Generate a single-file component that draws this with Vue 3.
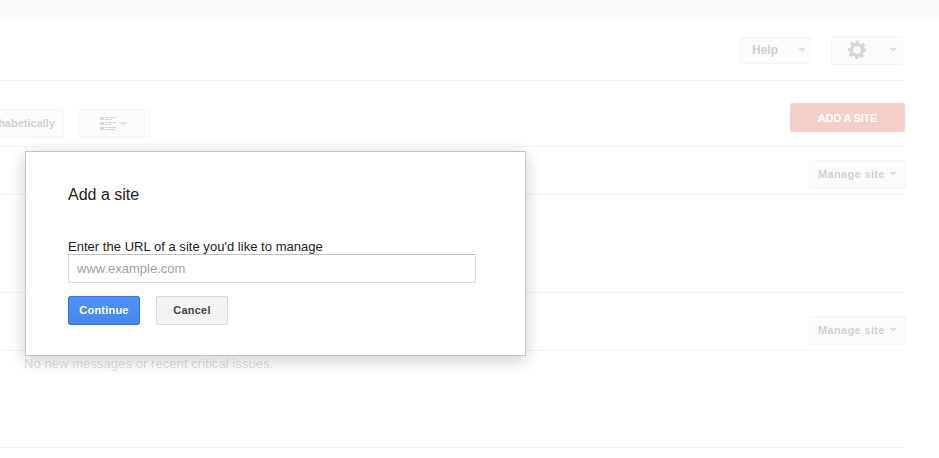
<script setup>
const placeholder = 'www.example.com'
</script>

<template>
  <div class="page">
    <div class="topbar"></div>
    <main class="main">
      <header class="head">
        <button class="btn help">Help<span class="caret"></span></button>
        <button class="btn gear">
          <svg width="20" height="20" viewBox="0 0 24 24">
            <path fill="#666" fill-rule="evenodd" d="M10 1h4l.6 3.200 1.900.8 2.700-1.800 2.800 2.800-1.800 2.700.8 1.900L23 10v4l-3.200.6-.8 1.900 1.800 2.700-2.800 2.800-2.700-1.800-1.900.8L14 23h-4l-.6-3.200-1.900-.8-2.700 1.800-2.800-2.800 1.800-2.700-.8-1.900L1 14v-4l3.200-.6.8-1.900-1.800-2.700 2.800-2.800 2.700 1.800 1.900-.8zM12 7.500a4.500 4.500 0 1 0 0 9 4.500 4.500 0 0 0 0-9z"/>
          </svg>
          <span class="caret"></span>
        </button>
      </header>
      <section class="toolbar">
        <button class="btn sort">Sort alphabetically</button>
        <button class="btn list">
          <svg width="16" height="14" viewBox="0 0 16 14">
            <g fill="#666">
              <rect x="0" y="0" width="4" height="3"/>
              <rect x="0" y="5" width="4" height="3"/>
              <rect x="0" y="10" width="4" height="3"/>
              <rect x="5" y="0" width="11" height="1"/>
              <rect x="5" y="2" width="7" height="1"/>
              <rect x="5" y="5" width="11" height="1"/>
              <rect x="5" y="7" width="7" height="1"/>
              <rect x="5" y="10" width="11" height="1"/>
              <rect x="5" y="12" width="11" height="1"/>
            </g>
          </svg>
          <span class="caret"></span>
        </button>
        <button class="add">Add a site</button>
      </section>
      <section class="site-head">
        <button class="btn manage">Manage site<span class="caret"></span></button>
      </section>
      <section class="site-body"></section>
      <section class="site-head tall">
        <button class="btn manage">Manage site<span class="caret"></span></button>
      </section>
      <section class="site-body last">
        <p class="empty">No new messages or recent critical issues.</p>
      </section>
    </main>

    <div class="overlay"></div>

    <div class="modal">
      <h2 class="title">Add a site</h2>
      <label class="label" for="url">Enter the URL of a site you'd like to manage</label>
      <input id="url" class="field" type="text" :placeholder="placeholder" />
      <div class="actions">
        <button class="action primary">Continue</button>
        <button class="action">Cancel</button>
      </div>
    </div>
  </div>
</template>

<style>
html, body {
  margin: 0;
  background: #fff;
}
</style>

<style scoped>
.page {
  position: relative;
  height: 458px;
  overflow: hidden;
  font-family: "Liberation Sans", Arial, sans-serif;
  color: #222;
}

.topbar {
  height: 20px;
  background: #ebebeb;
}

.main {
  width: 905px;
}

.head {
  display: flex;
  height: 61px;
  align-items: center;
  justify-content: flex-end;
  gap: 20px;
  padding-right: 2px;
  box-sizing: border-box;
  border-bottom: 1px solid #d8d8d8;
}

.btn {
  display: inline-flex;
  align-items: center;
  box-sizing: border-box;
  height: 29px;
  border: 1px solid #d8d8d8;
  border-radius: 2px;
  background: #f0f0f0;
  color: #444;
  font: bold 11px "Liberation Sans", Arial, sans-serif;
  padding: 0;
}

.caret {
  width: 0;
  height: 0;
  border-left: 4px solid transparent;
  border-right: 4px solid transparent;
  border-top: 4px solid #888;
}

.help {
  width: 72px;
  height: 27px;
  padding-left: 12px;
  font-size: 12px;
}

.help .caret {
  margin-left: 20px;
}

.gear {
  width: 72px;
  padding-left: 15px;
}

.gear .caret {
  margin-left: 22px;
}

.toolbar {
  display: flex;
  height: 66px;
  align-items: flex-start;
  box-sizing: border-box;
  border-bottom: 1px solid #d8d8d8;
}

.sort {
  flex: none;
  width: 120px;
  margin: 28px 0 0 -56px;
  justify-content: flex-end;
  padding: 0 8px 2px 0;
}

.list {
  width: 72px;
  margin: 28px 0 0 14px;
  padding-left: 21px;
}

.list .caret {
  margin-left: 3px;
}

.add {
  margin: 22px 0 0 auto;
  width: 115px;
  height: 29px;
  border: 1px solid #d14836;
  border-radius: 2px;
  background: #d7432b;
  color: #fff;
  font: bold 11px "Liberation Sans", Arial, sans-serif;
  letter-spacing: -0.2px;
  text-transform: uppercase;
  padding: 0;
}

.site-head {
  display: flex;
  height: 48px;
  align-items: flex-start;
  justify-content: flex-end;
  box-sizing: border-box;
  padding-top: 13px;
  border-bottom: 1px solid #d8d8d8;
}

.site-head.tall {
  height: 58px;
  padding-top: 23px;
}

.manage {
  width: 97px;
  margin-right: -1px;
  padding: 0 0 2px 8px;
  letter-spacing: 0.35px;
}

.manage .caret {
  margin-left: 4px;
}

.site-body {
  height: 98px;
  box-sizing: border-box;
  border-bottom: 1px solid #d8d8d8;
}

.site-body.last {
  height: 97px;
}

.empty {
  margin: 0;
  padding: 5px 0 0 24px;
  font-size: 13px;
  letter-spacing: 0.07px;
  color: #777;
}

.overlay {
  position: absolute;
  inset: 0;
  background: rgba(255, 255, 255, 0.75);
}

.modal {
  position: absolute;
  left: 25px;
  top: 151px;
  width: 501px;
  height: 205px;
  box-sizing: border-box;
  padding: 34px 42px 0;
  background: #fff;
  border: 1px solid #c4c4c4;
  box-shadow: 0 4px 16px rgba(0, 0, 0, 0.2);
}

.title {
  margin: 0;
  font-size: 16px;
  line-height: 18px;
  font-weight: normal;
}

.label {
  display: block;
  margin-top: 36px;
  font-size: 13px;
  line-height: 14px;
  letter-spacing: 0.03px;
}

.field {
  display: block;
  box-sizing: border-box;
  width: 408px;
  height: 29px;
  margin: 0;
  padding: 0 8px;
  border: 1px solid #d9d9d9;
  border-top-color: #c0c0c0;
  border-radius: 0;
  outline: none;
  font: 13px "Liberation Sans", Arial, sans-serif;
}

.field::placeholder {
  color: #a0a0a0;
  opacity: 1;
}

.actions {
  display: flex;
  gap: 16px;
  margin-top: 13px;
}

.action {
  width: 72px;
  height: 29px;
  padding: 0 0 2px;
  box-sizing: border-box;
  border: 1px solid #dcdcdc;
  border-radius: 2px;
  background: #f3f3f3;
  color: #444;
  font: bold 11px "Liberation Sans", Arial, sans-serif;
  letter-spacing: 0.2px;
}

.primary {
  border-color: #3079ed;
  background: linear-gradient(#4d90fe, #4787ed);
  color: #fff;
}
</style>
